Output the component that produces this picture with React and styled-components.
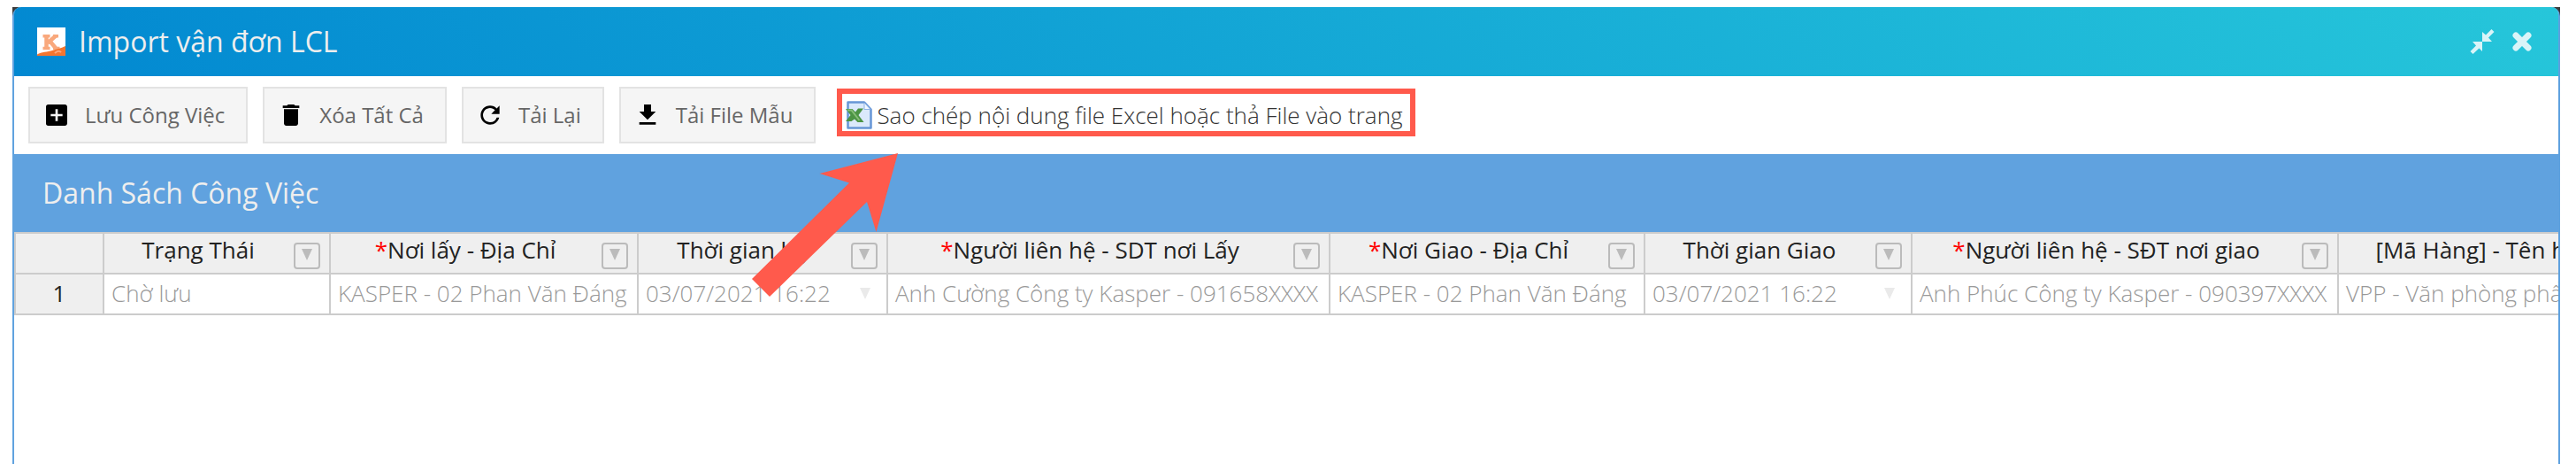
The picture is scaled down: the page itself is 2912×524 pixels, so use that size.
import React from 'react';
import styled, { createGlobalStyle } from 'styled-components';
import { MdAddBox, MdDelete, MdRefresh, MdFileDownload } from 'react-icons/md';

const BLUE = '#60a2df';
const RED = '#ff5a4c';
const LINE = '#cccccc';

const GlobalStyle = createGlobalStyle`
  *, *::before, *::after { box-sizing: border-box; }
  body {
    margin: 0;
    background: #fff;
    font-family: "Open Sans", sans-serif;
  }
  button { font-family: inherit; cursor: pointer; }
`;

const Page = styled.div`
  padding: 8px 18px 0 14px;
`;

const Backdrop = styled.div`
  background: #3c3c3c;
`;

const Window = styled.main`
  display: flex;
  flex-direction: column;
  min-height: calc(100vh - 8px);
  border: 2px solid ${BLUE};
  border-width: 0 2px;
  border-radius: 10px 10px 0 0;
  background: #fff;
`;

const TitleBar = styled.header`
  display: flex;
  align-items: center;
  gap: 15px;
  height: 78px;
  padding: 0 26px;
  border-radius: 8px 8px 0 0;
  background: linear-gradient(45deg, #0288d1, #26c6da);
`;

const Title = styled.h1`
  flex: 1;
  margin: 0;
  font-size: 32px;
  line-height: 44px;
  font-weight: 400;
  color: #eeeeee;
`;

const WindowButton = styled.button`
  display: flex;
  align-items: center;
  justify-content: center;
  width: 30px;
  height: 30px;
  padding: 0;
  border: 0;
  background: none;
  color: #d9f4f8;
`;

const Toolbar = styled.div`
  display: flex;
  align-items: center;
  gap: 17px;
  height: 88px;
  padding: 0 16px;
`;

const ToolButton = styled.button`
  display: flex;
  align-items: center;
  gap: 16px;
  height: 64px;
  padding: 0 24px 0 14px;
  border: 2px solid #e3e3e3;
  background: #f5f5f5;
  color: #666;
  font-size: 24px;
  line-height: 32px;
  white-space: nowrap;

  svg { width: 32px; height: 32px; color: #000; }
`;

const Callout = styled.div`
  position: relative;
  z-index: 1;
  display: flex;
  align-items: center;
  gap: 5px;
  height: 54px;
  margin: 0 0 6px 7px;
  padding: 6px 8px 0 4px;
  border: 6px solid ${RED};
  color: #333;
  font-size: 26px;
  line-height: 36px;
  font-weight: 300;
  white-space: nowrap;
`;

const Arrow = styled.svg`
  position: absolute;
  left: -102px;
  top: 67px;
  pointer-events: none;
`;

const SectionTitle = styled.h2`
  display: flex;
  align-items: center;
  height: 88px;
  margin: 0;
  padding: 0 32px;
  background: ${BLUE};
  color: #eeeeee;
  font-size: 32px;
  line-height: 44px;
  font-weight: 400;
`;

const GridArea = styled.div`
  overflow: auto;
  scrollbar-width: none;
`;

const Sheet = styled.table`
  table-layout: fixed;
  width: 0;
  min-width: 100%;
  border-collapse: separate;
  border-spacing: 0;
  border-top: 2px solid ${LINE};
  border-left: 2px solid ${LINE};
  font-size: 26px;
  line-height: 36px;
`;

const HeadCell = styled.th`
  height: 46px;
  padding: 0;
  border: 0 solid ${LINE};
  border-width: 0 2px 2px 0;
  background: #efefef;
  color: #222;
  font-weight: 400;
`;

const HeadInner = styled.div`
  display: flex;
  align-items: flex-start;
  justify-content: space-between;
  height: 44px;
  padding-right: 10px;
`;

const HeadLabel = styled.span`
  flex: 1;
  padding-right: 2px;
  text-align: center;
  white-space: nowrap;
`;

const Required = styled.span`
  color: #f00;
`;

const FilterButton = styled.button`
  display: flex;
  align-items: center;
  justify-content: center;
  width: 30px;
  height: 30px;
  margin-top: 10px;
  padding: 0 0 4px;
  border: 2px solid #bbb;
  border-radius: 4px;
  background: none;
  color: #bbb;
`;

const RowNumber = styled(HeadCell)`
  padding-bottom: 2px;
  text-align: center;
`;

const Cell = styled.td`
  height: 46px;
  padding: 0 8px 2px;
  border: 0 solid ${LINE};
  border-width: 0 2px 2px 0;
  background: #fff;
  color: #999;
  font-weight: 300;
  white-space: nowrap;
`;

const DateField = styled.div`
  display: flex;
  align-items: center;
  justify-content: space-between;
  padding-right: 10px;
`;

const DateToggle = styled.button`
  display: flex;
  padding: 0;
  border: 0;
  background: none;
  color: #eaeaea;
`;

const Triangle = () => (
  <svg width="12" height="13" viewBox="0 0 12 13" aria-hidden="true">
    <path d="M0 0h12L6 13z" fill="currentColor" />
  </svg>
);

const Logo = () => (
  <svg width="32" height="32" viewBox="0 0 32 32" aria-hidden="true">
    <rect width="32" height="32" fill="#fff" />
    <g fill="none" stroke="#f9a87c">
      <path d="M10.500 8.500v16M21 9.500l-9 8M14 15l7.500 9" strokeWidth="4.500" />
      <path d="M6.500 9.800h8M18 9.800h6M6.500 23.500h8M18 23.500h7.500" strokeWidth="3.400" />
    </g>
    <path d="M0 30.500C5 27.500 11 28 18 25.800S27 23.500 32 21V32H0z" fill="#f4752f" />
    <path d="M20 29q4-4 7-1" fill="none" stroke="#f9a87c" strokeWidth="2" />
  </svg>
);

const ExcelIcon = () => (
  <svg width="30" height="32" viewBox="0 0 30 32" aria-hidden="true">
    <path d="M2.500 1.500h18.500l7.500 8v21h-26z" fill="#dbe9fb" stroke="#6796d6" strokeWidth="2.500" strokeLinejoin="round" />
    <path d="M21 2v7.500h7z" fill="#f2f8ff" stroke="#8db3e6" />
    <path d="M0 9h7.500l3.500 3.500L14 8.500h6L14.500 16l6 8h-7L10 20.500 6.500 23H0l5.500-7z" fill="#4c9444" />
    <path d="M2 10.500h4.500l9 11.500" fill="none" stroke="#86bd76" strokeWidth="2" />
  </svg>
);

const RestoreIcon = () => (
  <svg width="28" height="28" viewBox="0 0 28 28" aria-hidden="true" fill="currentColor">
    <path d="M14 14V3l4 3.500L24.500 0l3 3L21 9.500l4 4.500z" />
    <path d="M14 14v11l-3.500-3.500L3.500 28l-3-3L7 18.500 3 14z" />
  </svg>
);

const CloseIcon = () => (
  <svg width="24" height="24" viewBox="0 0 24 24" aria-hidden="true">
    <path d="M5 5l14 14M19 5L5 19" stroke="currentColor" strokeWidth="7" strokeLinecap="round" />
  </svg>
);

const tools = [
  { label: 'Lưu Công Việc', Icon: MdAddBox },
  { label: 'Xóa Tất Cả', Icon: MdDelete },
  { label: 'Tải Lại', Icon: MdRefresh },
  { label: 'Tải File Mẫu', Icon: MdFileDownload },
];

const columns = [
  { label: 'Trạng Thái', width: 256, value: 'Chờ lưu' },
  { label: 'Nơi lấy - Địa Chỉ', required: true, width: 348, value: 'KASPER - 02 Phan Văn Đáng' },
  { label: 'Thời gian lấy', width: 282, value: '03/07/2021 16:22', date: true },
  { label: 'Người liên hệ - SDT nơi Lấy', required: true, width: 500, value: 'Anh Cường Công ty Kasper - 091658XXXX' },
  { label: 'Nơi Giao - Địa Chỉ', required: true, width: 356, value: 'KASPER - 02 Phan Văn Đáng' },
  { label: 'Thời gian Giao', width: 302, value: '03/07/2021 16:22', date: true },
  { label: 'Người liên hệ - SĐT nơi giao', required: true, width: 482, value: 'Anh Phúc Công ty Kasper - 090397XXXX' },
  { label: '[Mã Hàng] - Tên hàng', width: 386, value: 'VPP - Văn phòng phẩm' },
];

export default function App() {
  return (
    <Page>
      <GlobalStyle />
      <Backdrop>
        <Window>
          <TitleBar>
            <Logo />
            <Title>Import vận đơn LCL</Title>
            <WindowButton aria-label="Thu nhỏ"><RestoreIcon /></WindowButton>
            <WindowButton aria-label="Đóng"><CloseIcon /></WindowButton>
          </TitleBar>
          <Toolbar>
            {tools.map(({ label, Icon }) => (
              <ToolButton key={label} type="button"><Icon />{label}</ToolButton>
            ))}
            <Callout>
              <ExcelIcon />
              <span>Sao chép nội dung file Excel hoặc thả File vào trang</span>
              <Arrow width="165" height="162" viewBox="0 0 165 162" aria-hidden="true">
                <path d="M165 0 76.500 23 110 33.500 0 142l20 20L130 55l10.500 34z" fill={RED} />
              </Arrow>
            </Callout>
          </Toolbar>
          <SectionTitle>Danh Sách Công Việc</SectionTitle>
          <GridArea>
            <Sheet>
              <colgroup>
                <col style={{ width: 100 }} />
                {columns.map((c) => <col key={c.label} style={{ width: c.width }} />)}
              </colgroup>
              <thead>
                <tr>
                  <HeadCell />
                  {columns.map((c) => (
                    <HeadCell key={c.label} scope="col">
                      <HeadInner>
                        <HeadLabel>{c.required && <Required>*</Required>}{c.label}</HeadLabel>
                        <FilterButton type="button" aria-label={`Lọc ${c.label}`}><Triangle /></FilterButton>
                      </HeadInner>
                    </HeadCell>
                  ))}
                </tr>
              </thead>
              <tbody>
                <tr>
                  <RowNumber scope="row">1</RowNumber>
                  {columns.map((c) => (
                    <Cell key={c.label}>
                      {c.date ? (
                        <DateField>
                          {c.value}
                          <DateToggle type="button" aria-label={`Chọn ${c.label}`}><Triangle /></DateToggle>
                        </DateField>
                      ) : c.value}
                    </Cell>
                  ))}
                </tr>
              </tbody>
            </Sheet>
          </GridArea>
        </Window>
      </Backdrop>
    </Page>
  );
}
